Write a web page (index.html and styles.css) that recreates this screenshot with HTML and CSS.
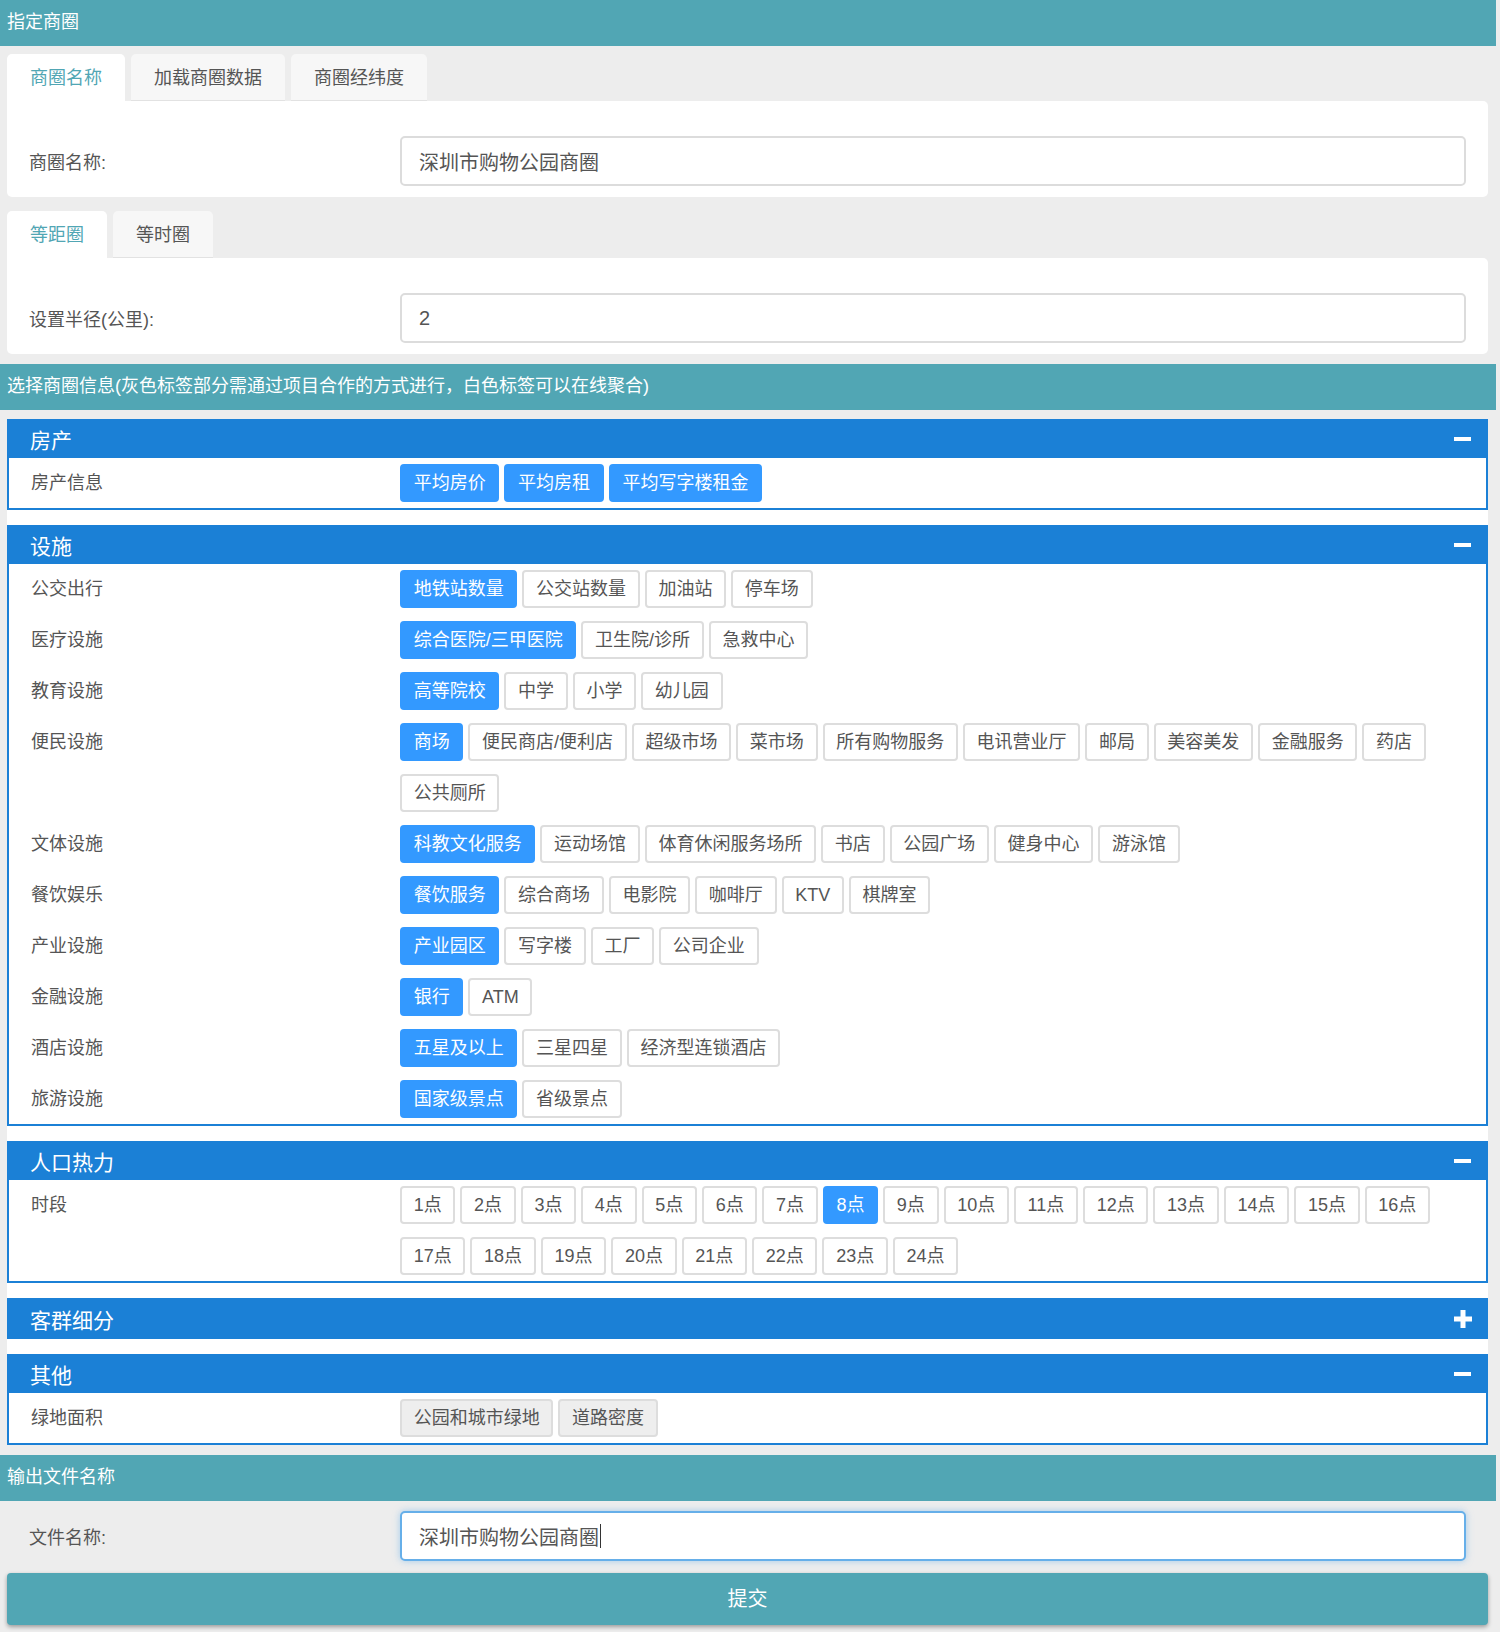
FILE: index.html
```html
<!DOCTYPE html>
<html lang="zh-CN">
<head>
<meta charset="utf-8">
<title>指定商圈</title>
<link rel="stylesheet" href="styles.css">
</head>
<body>
<div class="page">
  <div class="bar bar-first">指定商圈</div>

  <div class="tabs">
    <div class="tab active">商圈名称</div>
    <div class="tab">加载商圈数据</div>
    <div class="tab">商圈经纬度</div>
  </div>
  <div class="tab-panel">
    <div class="form-label">商圈名称:</div>
    <input class="field" type="text" value="深圳市购物公园商圈">
  </div>

  <div class="tabs tabs-second">
    <div class="tab active">等距圈</div>
    <div class="tab">等时圈</div>
  </div>
  <div class="tab-panel">
    <div class="form-label">设置半径(公里):</div>
    <input class="field" type="text" value="2">
  </div>

  <div class="bar bar-mid">选择商圈信息(灰色标签部分需通过项目合作的方式进行，白色标签可以在线聚合)</div>

  <div class="groups">
    <div class="group">
      <div class="group-head"><span>房产</span><svg class="icon" width="18" height="18" viewBox="0 0 18 18"><rect x="0" y="7" width="17" height="4" fill="#fff"/></svg></div>
      <div class="group-body">
        <div class="row"><div class="row-label">房产信息</div><div class="tags"><span class="tag on">平均房价</span><span class="tag on">平均房租</span><span class="tag on">平均写字楼租金</span></div></div>
      </div>
    </div>

    <div class="group">
      <div class="group-head"><span>设施</span><svg class="icon" width="18" height="18" viewBox="0 0 18 18"><rect x="0" y="7" width="17" height="4" fill="#fff"/></svg></div>
      <div class="group-body">
        <div class="row"><div class="row-label">公交出行</div><div class="tags"><span class="tag on">地铁站数量</span><span class="tag">公交站数量</span><span class="tag">加油站</span><span class="tag">停车场</span></div></div>
        <div class="row"><div class="row-label">医疗设施</div><div class="tags"><span class="tag on">综合医院/三甲医院</span><span class="tag">卫生院/诊所</span><span class="tag">急救中心</span></div></div>
        <div class="row"><div class="row-label">教育设施</div><div class="tags"><span class="tag on">高等院校</span><span class="tag">中学</span><span class="tag">小学</span><span class="tag">幼儿园</span></div></div>
        <div class="row"><div class="row-label">便民设施</div><div class="tags"><span class="tag on">商场</span><span class="tag">便民商店/便利店</span><span class="tag">超级市场</span><span class="tag">菜市场</span><span class="tag">所有购物服务</span><span class="tag">电讯营业厅</span><span class="tag">邮局</span><span class="tag">美容美发</span><span class="tag">金融服务</span><span class="tag">药店</span><span class="tag">公共厕所</span></div></div>
        <div class="row"><div class="row-label">文体设施</div><div class="tags"><span class="tag on">科教文化服务</span><span class="tag">运动场馆</span><span class="tag">体育休闲服务场所</span><span class="tag">书店</span><span class="tag">公园广场</span><span class="tag">健身中心</span><span class="tag">游泳馆</span></div></div>
        <div class="row"><div class="row-label">餐饮娱乐</div><div class="tags"><span class="tag on">餐饮服务</span><span class="tag">综合商场</span><span class="tag">电影院</span><span class="tag">咖啡厅</span><span class="tag">KTV</span><span class="tag">棋牌室</span></div></div>
        <div class="row"><div class="row-label">产业设施</div><div class="tags"><span class="tag on">产业园区</span><span class="tag">写字楼</span><span class="tag">工厂</span><span class="tag">公司企业</span></div></div>
        <div class="row"><div class="row-label">金融设施</div><div class="tags"><span class="tag on">银行</span><span class="tag">ATM</span></div></div>
        <div class="row"><div class="row-label">酒店设施</div><div class="tags"><span class="tag on">五星及以上</span><span class="tag">三星四星</span><span class="tag">经济型连锁酒店</span></div></div>
        <div class="row"><div class="row-label">旅游设施</div><div class="tags"><span class="tag on">国家级景点</span><span class="tag">省级景点</span></div></div>
      </div>
    </div>

    <div class="group">
      <div class="group-head"><span>人口热力</span><svg class="icon" width="18" height="18" viewBox="0 0 18 18"><rect x="0" y="7" width="17" height="4" fill="#fff"/></svg></div>
      <div class="group-body">
        <div class="row"><div class="row-label">时段</div><div class="tags"><span class="tag">1点</span><span class="tag">2点</span><span class="tag">3点</span><span class="tag">4点</span><span class="tag">5点</span><span class="tag">6点</span><span class="tag">7点</span><span class="tag on">8点</span><span class="tag">9点</span><span class="tag">10点</span><span class="tag">11点</span><span class="tag">12点</span><span class="tag">13点</span><span class="tag">14点</span><span class="tag">15点</span><span class="tag">16点</span><span class="tag">17点</span><span class="tag">18点</span><span class="tag">19点</span><span class="tag">20点</span><span class="tag">21点</span><span class="tag">22点</span><span class="tag">23点</span><span class="tag">24点</span></div></div>
      </div>
    </div>

    <div class="group collapsed">
      <div class="group-head"><span>客群细分</span><svg class="icon" width="18" height="18" viewBox="0 0 18 18"><rect x="6.5" y="0" width="5" height="18" fill="#fff"/><rect x="0" y="6.5" width="18" height="5" fill="#fff"/></svg></div>
    </div>

    <div class="group">
      <div class="group-head"><span>其他</span><svg class="icon" width="18" height="18" viewBox="0 0 18 18"><rect x="0" y="7" width="17" height="4" fill="#fff"/></svg></div>
      <div class="group-body">
        <div class="row"><div class="row-label">绿地面积</div><div class="tags"><span class="tag off">公园和城市绿地</span><span class="tag off">道路密度</span></div></div>
      </div>
    </div>
  </div>

  <div class="bar bar-out">输出文件名称</div>
  <div class="file-row">
    <div class="form-label">文件名称:</div>
    <div class="field field-focus">深圳市购物公园商圈<span class="caret"></span></div>
  </div>
  <div class="submit">提交</div>
</div>
</body>
</html>
```

FILE: styles.css
```css
html, body {
  margin: 0;
  padding: 0;
}
body {
  background: #ededed;
  font-family: "Liberation Sans", "Noto Sans CJK SC", sans-serif;
  color: #555;
}
.page {
  width: 1496px;
  height: 1632px;
  overflow: hidden;
}
.bar {
  background: #51a6b4;
  color: #fff;
  height: 46px;
  line-height: 44px;
  padding-left: 7px;
  font-size: 18px;
}
.bar-mid { margin-top: 10px; }
.bar-out { margin-top: 10px; }

.tabs {
  display: flex;
  gap: 6px;
  margin: 8px 8px 0 7px;
}
.tabs-second { margin-top: 14px; }
.tab {
  box-sizing: border-box;
  height: 47px;
  line-height: 48px;
  padding: 0 23px;
  font-size: 18px;
  color: #555;
  background: #f7f7f7;
  border-radius: 5px 5px 0 0;
  border-bottom: 1px solid #e2e2e2;
}
.tab.active {
  background: #fff;
  color: #51a6b4;
  border-bottom-color: #fff;
}
.tab-panel {
  display: flex;
  align-items: center;
  background: #fff;
  margin: 0 8px 0 7px;
  border-radius: 0 5px 5px 5px;
  padding: 35px 22px 11px 22px;
}
.form-label {
  width: 371px;
  flex-shrink: 0;
  font-size: 18px;
  color: #555;
}
.field {
  flex: 1;
  box-sizing: border-box;
  height: 50px;
  border: 2px solid #dcdcdc;
  border-radius: 5px;
  padding: 0 17px;
  font-family: "Liberation Sans", "Noto Sans CJK SC", sans-serif;
  font-size: 20px;
  color: #555;
  background: #fff;
  outline: none;
}
.field-focus {
  display: flex;
  align-items: center;
  border-color: #66afe9;
  box-shadow: 0 0 7px rgba(102, 175, 233, 0.55);
}
.caret {
  display: inline-block;
  width: 1px;
  height: 24px;
  background: #333;
  margin-left: 1px;
}

.groups {
  background: #fff;
  margin: 9px 8px 0 7px;
  display: flex;
  flex-direction: column;
  gap: 15px;
}
.group-head {
  background: #1b80d6;
  height: 39px;
  display: flex;
  align-items: center;
  justify-content: space-between;
  padding: 0 16px 0 23px;
  color: #fff;
  font-size: 21px;
}
.collapsed .group-head { height: 41px; }
.icon { display: block; }
.group-body {
  border: 2px solid #1b80d6;
  border-top: 0;
  padding: 6px 20px 6px 0;
  display: flex;
  flex-direction: column;
  gap: 13px;
}
.row {
  display: flex;
}
.row-label {
  box-sizing: border-box;
  width: 391px;
  flex-shrink: 0;
  padding-left: 22px;
  font-size: 18px;
  line-height: 38px;
  color: #555;
}
.tags {
  flex: 1;
  display: flex;
  flex-wrap: wrap;
  gap: 13px 5px;
}
.tag {
  box-sizing: border-box;
  height: 38px;
  border: 2px solid #dddddd;
  border-radius: 4px;
  padding: 0 11.7px;
  line-height: 34px;
  font-size: 18px;
  color: #555;
  background: #fff;
  white-space: nowrap;
}
.tag.on {
  background: #3399ff;
  border-color: #3399ff;
  color: #fff;
}
.tag.off {
  background: #eeeeee;
}

.file-row {
  display: flex;
  align-items: center;
  margin-top: 10px;
  padding: 0 30px 0 29px;
}
.submit {
  margin: 12px 8px 0 7px;
  height: 52px;
  line-height: 52px;
  background: #51a6b4;
  border-radius: 4px;
  box-shadow: 0 2px 4px rgba(0, 0, 0, 0.35);
  color: #fff;
  font-size: 20px;
  text-align: center;
}
```
